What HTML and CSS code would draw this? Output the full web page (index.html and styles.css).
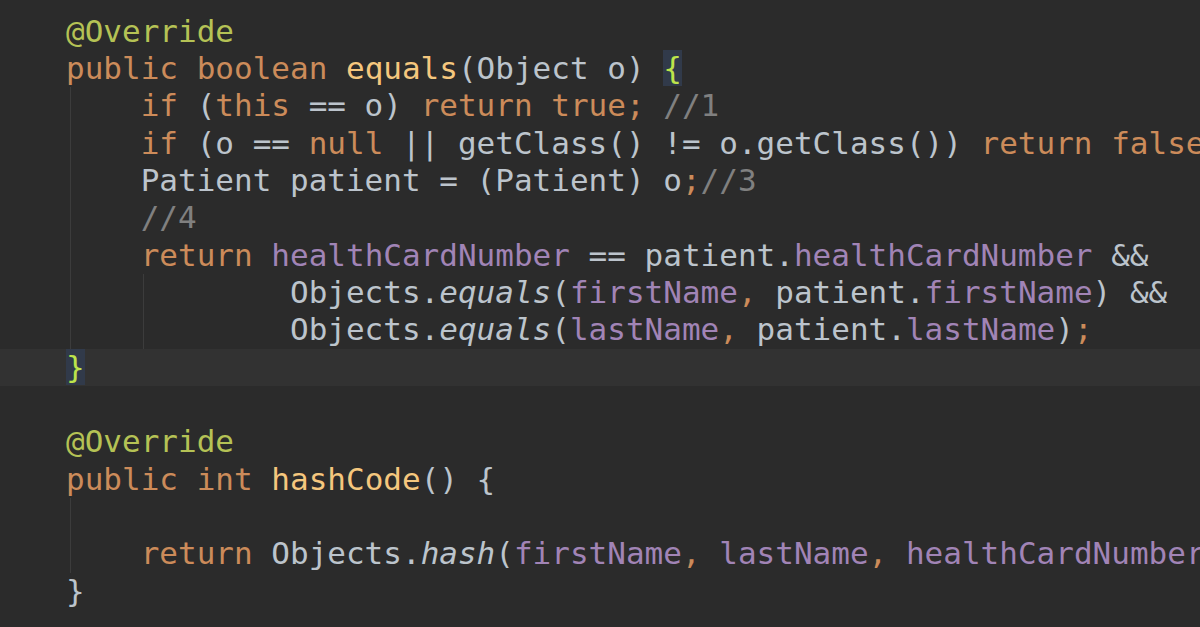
FILE: index.html
```html
<!DOCTYPE html>
<html>
<head>
<meta charset="utf-8">
<link rel="stylesheet" href="styles.css">
</head>
<body>
<div class="editor">
  <div class="line"><span class="ann">@Override</span></div>
  <div class="line"><span class="kw">public boolean</span> <span class="fn">equals</span>(Object o) <span class="brace">{</span></div>
  <div class="block">
    <div class="line">    <span class="kw">if</span> (<span class="kw">this</span> == o) <span class="kw">return true;</span> <span class="cm">//1</span></div>
    <div class="line">    <span class="kw">if</span> (o == <span class="kw">null</span> || getClass() != o.getClass()) <span class="kw">return false;</span></div>
    <div class="line">    Patient patient = (Patient) o<span class="kw">;</span><span class="cm">//3</span></div>
    <div class="line">    <span class="cm">//4</span></div>
    <div class="line">    <span class="kw">return</span> <span class="fd">healthCardNumber</span> == patient.<span class="fd">healthCardNumber</span> &amp;&amp;</div>
    <div class="block inner">
      <div class="line">            Objects.<span class="it">equals</span>(<span class="fd">firstName</span><span class="kw">,</span> patient.<span class="fd">firstName</span>) &amp;&amp;</div>
      <div class="line">            Objects.<span class="it">equals</span>(<span class="fd">lastName</span><span class="kw">,</span> patient.<span class="fd">lastName</span>)<span class="kw">;</span></div>
    </div>
  </div>
  <div class="line current"><span class="brace">}</span></div>
  <div class="line"> </div>
  <div class="line"><span class="ann">@Override</span></div>
  <div class="line"><span class="kw">public int</span> <span class="fn">hashCode</span>() {</div>
  <div class="block">
    <div class="line"> </div>
    <div class="line">    <span class="kw">return</span> Objects.<span class="it">hash</span>(<span class="fd">firstName</span><span class="kw">,</span> <span class="fd">lastName</span><span class="kw">,</span> <span class="fd">healthCardNumber</span>)<span class="kw">;</span></div>
  </div>
  <div class="line">}</div>
</div>
</body>
</html>
```

FILE: styles.css
```css
html, body {
  margin: 0;
  padding: 0;
  background: #2b2b2b;
}

.editor {
  width: 1200px;
  height: 627px;
  overflow: hidden;
  box-sizing: border-box;
  padding-top: 12.6px;
  background: #2b2b2b;
  font-family: "DejaVu Sans Mono", "Liberation Mono", monospace;
  font-size: 31px;
  color: #bcc4cc;
}

.line {
  height: 37.33px;
  line-height: 37.33px;
  white-space: pre;
  padding-left: 66px;
}

.block {
  background-image: linear-gradient(#3c3c3c, #3c3c3c);
  background-repeat: no-repeat;
  background-size: 1px 100%;
  background-position: 70px 0;
}

.block.inner {
  background-position: 143px 0;
}

.current {
  background: #323232;
}

.kw { color: #cc8b5a; }
.fn { color: #f5c77e; }
.ann { color: #b5c255; }
.fd { color: #a184b6; }
.cm { color: #808080; }
.it { font-style: italic; }

.brace {
  color: #bde44b;
  background: #313a4a;
}
```
